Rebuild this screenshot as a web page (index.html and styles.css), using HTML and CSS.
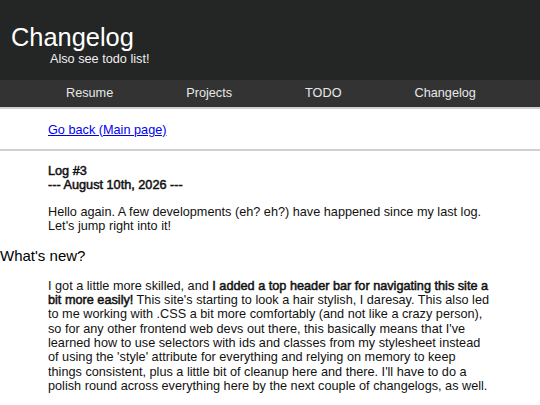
FILE: index.html
```html
<!DOCTYPE html>
<html lang="en">
<head>
    <meta charset="UTF-8">
    <meta name="viewport" content="width=device-width, initial-scale=1.0">
    <title>Changelog</title>
    <link rel="stylesheet" href="styles.css">
</head>
<body>
    <div class="header">
        <h1>Changelog</h1>
        <p class="subtitle">Also see todo list!</p>
    </div>

    <div class="navbar">
        <a href="#">Resume</a>
        <a href="#">Projects</a>
        <a href="#">TODO</a>
        <a href="#">Changelog</a>
    </div>

    <div class="content">
        <p class="indent"><a class="back" href="#">Go back (Main page)</a></p>
        <hr>

        <p class="indent log-title">Log #3<br>--- August 10th, 2026 ---</p>
        <p class="indent">Hello again. A few developments (eh? eh?) have happened since my last log. Let's jump right into it!</p>

        <h3>What's new?</h3>
        <p class="indent">I got a little more skilled, and <b class="strong">I added a top header bar for navigating this site a bit more easily!</b> This site's starting to look a hair stylish, I daresay. This also led to me working with .CSS a bit more comfortably (and not like a crazy person), so for any other frontend web devs out there, this basically means that I've learned how to use selectors with ids and classes from my stylesheet instead of using the 'style' attribute for everything and relying on memory to keep things consistent, plus a little bit of cleanup here and there. I'll have to do a polish round across everything here by the next couple of changelogs, as well.</p>
    </div>
</body>
</html>
```

FILE: styles.css
```css
body {
    margin: 0;
    padding: 0;
    background-color: #fff;
    font-family: 'Liberation Sans', Arial, sans-serif;
    font-size: 12.7px;
    line-height: 14.4px;
    color: #111;
}

.header {
    background-color: #242525;
    color: #fff;
    padding: 23px 0 13px 11px;
}

.header h1 {
    margin: 0;
    font-size: 25.4px;
    line-height: 29.4px;
    font-weight: normal;
}

.subtitle {
    margin: 0 0 0 39px;
    line-height: 14.6px;
    color: #f0f0f0;
}

.navbar {
    display: flex;
    gap: 73px;
    padding: 6px 0 6px 66px;
    background-color: #333;
    border-bottom: 2px solid #cfcfcf;
    line-height: 14.6px;
}

.navbar a {
    color: #e8e8e8;
    text-decoration: none;
}

.content {
    padding-top: 14px;
}

.content p {
    margin: 0 0 12px;
}

.indent {
    padding: 0 48px;
}

.back {
    color: #0000ee;
}

hr {
    border: none;
    border-top: 2px solid #d0d0d0;
    margin: 0 0 13px;
}

/* bold here keeps the regular widths, like a synthesized bold */
.log-title,
.strong {
    font-weight: normal;
    -webkit-text-stroke: 0.5px currentColor;
}

h3 {
    margin: 13px 0 15px;
    font-size: 15px;
    line-height: 17.2px;
    font-weight: normal;
    color: #000;
}

.content p:last-child {
    line-height: 14.3px;
}
```
